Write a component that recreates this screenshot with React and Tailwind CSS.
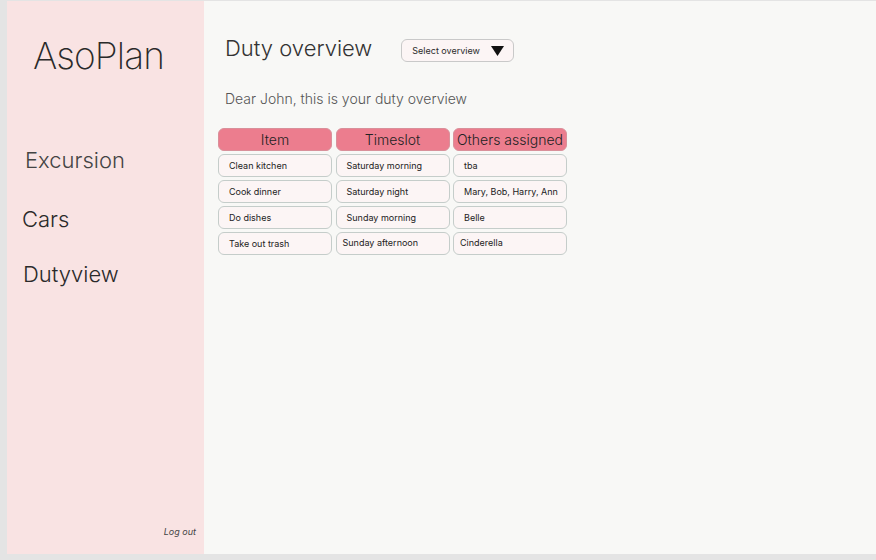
import React from 'react';

const rows = [
    ['Clean kitchen', 'Saturday morning', 'tba'],
    ['Cook dinner', 'Saturday night', 'Mary, Bob, Harry, Ann'],
    ['Do dishes', 'Sunday morning', 'Belle'],
    ['Take out trash', 'Sunday afternoon', 'Cinderella'],
];

export default function App() {
    return (
        <div className="w-[876px] h-[560px] bg-[#e4e4e4] pt-px pl-[7px] pb-[6px] flex text-[#2a2a2a]" style={{ fontFamily: 'Inter, "Noto Sans", sans-serif' }}>
            <aside className="w-[197px] bg-[#f9e3e3] flex flex-col">
                <h1 className="mt-[36px] ml-[26px] text-[37px] font-extralight tracking-tight leading-none">AsoPlan</h1>
                <nav className="mt-[70px] flex flex-col text-[22px] font-light">
                    <a className="ml-[18px] text-[#444]">Excursion</a>
                    <a className="ml-[15px] mt-[26px]">Cars</a>
                    <a className="ml-[16px] mt-[22px]">Dutyview</a>
                </nav>
                <div className="mt-auto mb-[16px] mr-[8px] text-right text-[9px] italic text-[#444]">Log out</div>
            </aside>
            <main className="flex-1 bg-[#f8f8f6] pl-[14px] pt-[35px]">
                <div className="flex items-start ml-[7px]">
                    <h2 className="text-[22px] font-light text-[#333] leading-none mt-[1px]">Duty overview</h2>
                    <button className="ml-[29px] mt-[3px] w-[113px] h-[23px] rounded-md border border-[#c9c9c9] bg-[#fcf5f5] flex items-center justify-between pl-[10px] pr-[9px] text-[9px]">
                        <span>Select overview</span>
                        <svg width="13" height="10" viewBox="0 0 13 10"><path d="M0 0h13L6.5 10z" fill="#111" /></svg>
                    </button>
                </div>
                <p className="mt-[26px] ml-[7px] text-[14px] font-light text-[#555]">Dear John, this is your duty overview</p>
                <div className="mt-[19px] grid grid-cols-[114px_114px_114px] gap-x-[3.5px] gap-y-[3px]">
                    {['Item', 'Timeslot', 'Others assigned'].map(h => (
                        <div key={h} className="h-[23px] rounded-md bg-[#ec7d8e] border border-[#d9909a] flex items-center justify-center text-[14px] font-light text-[#222] whitespace-nowrap">{h}</div>
                    ))}
                    {rows.map((r, i) => r.map((c, j) => (
                        <div key={i + '-' + j} className={`h-[23px] rounded-md bg-[#fcf5f5] border border-[#c5cdca] flex items-center text-[9px] text-[#222] whitespace-nowrap ${i === 3 && j > 0 ? 'pl-[6px] pb-[2px]' : 'pl-[10px]'}`}>{c}</div>
                    )))}
                </div>
            </main>
        </div>
    );
}
